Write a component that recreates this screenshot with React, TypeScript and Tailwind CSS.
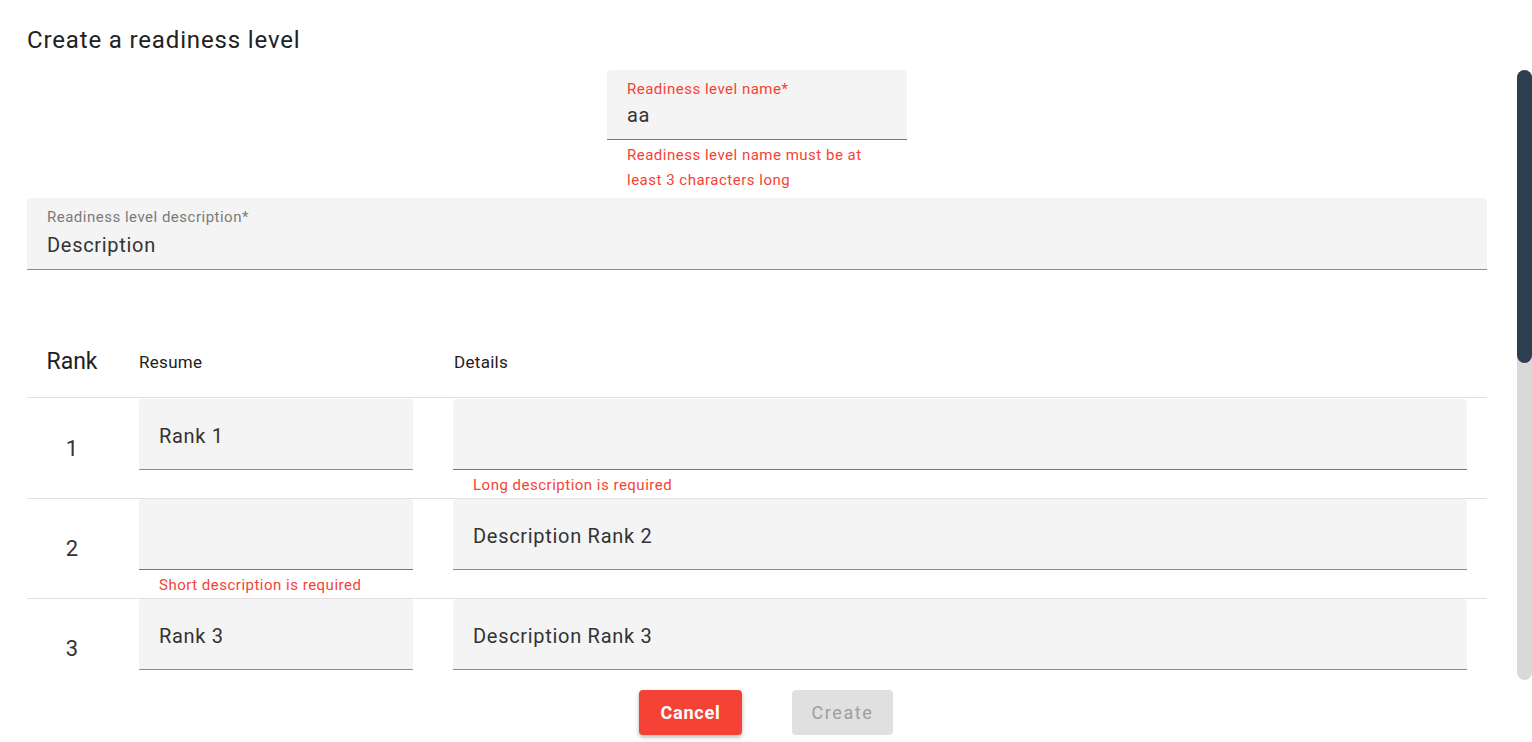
import React from 'react';

const red = 'text-[#f44336]';

function Field({
  value,
  error,
  className = '',
}: {
  value: string;
  error?: string;
  className?: string;
}) {
  return (
    <div className={className}>
      <div
        className={`h-[71px] bg-[#f4f4f4] rounded-t-[4px] border-b flex items-center pl-[20px] pt-[3px] ${
          error ? 'border-[#f44336]' : 'border-[#8c8c8c]'
        }`}
      >
        <span className="text-[20px] tracking-[0.7px] text-[#333]">{value}</span>
      </div>
      {error && (
        <div className={`pl-[20px] mt-[7px] text-[15px] leading-[16px] tracking-[0.5px] ${red}`}>{error}</div>
      )}
    </div>
  );
}

const rows = [
  { rank: 1, resume: 'Rank 1', details: '', detailsError: 'Long description is required' },
  { rank: 2, resume: '', resumeError: 'Short description is required', details: 'Description Rank 2' },
  { rank: 3, resume: 'Rank 3', details: 'Description Rank 3' },
];

export default function App() {
  return (
    <div className="w-[1532px] h-[742px] bg-white overflow-hidden flex flex-col font-['Roboto',sans-serif] text-[#212121]">
      {/* Title */}
      <div className="h-[70px] pl-[27px] pt-[25px]">
        <h1 className="text-[24px] leading-[30px] font-normal tracking-[0.85px]">Create a readiness level</h1>
      </div>

      {/* Scrolling body */}
      <div className="h-[610px] flex">
        <div className="flex-1 pl-[27px] pr-[30px] overflow-hidden">
          {/* Name */}
          <div className="flex flex-col items-center">
            <div className="w-[300px]">
              <div className="h-[70px] bg-[#f4f4f4] rounded-t-[4px] border-b border-[#f44336] px-[20px] pt-[11px]">
                <div className={`text-[15px] leading-[17px] tracking-[0.5px] ${red}`}>Readiness level name*</div>
                <div className="mt-[4px] text-[20px] leading-[26px] tracking-[0.7px] text-[#333]">aa</div>
              </div>
              <div className={`px-[20px] mt-[3px] text-[15px] leading-[25px] tracking-[0.5px] ${red}`}>
                Readiness level name must be at least 3 characters long
              </div>
            </div>
          </div>

          {/* Description */}
          <div className="mt-[5px] h-[72px] bg-[#f4f4f4] rounded-t-[4px] border-b border-[#8c8c8c] px-[20px] pt-[11px]">
            <div className="text-[15px] leading-[17px] tracking-[0.5px] text-[#7a7a7a]">Readiness level description*</div>
            <div className="mt-[6px] text-[20px] leading-[26px] tracking-[0.7px] text-[#333]">Description</div>
          </div>

          {/* Table */}
          <div className="mt-[58px]">
            <div className="h-[70px] flex items-center border-b border-[#e0e0e0]">
              <div className="w-[112px] pr-[22px] text-center text-[23px] text-[#212121]">Rank</div>
              <div className="w-[274px] text-[17px] tracking-[0.3px]">Resume</div>
              <div className="ml-[41px] text-[17px] tracking-[0.3px]">Details</div>
            </div>
            {rows.map((r, i) => (
              <div
                key={r.rank}
                className={`flex border-b border-[#e0e0e0] ${i === 0 ? 'h-[101px] pt-[1px]' : 'h-[100px]'}`}
              >
                <div className="w-[112px] pr-[22px] flex items-center justify-center text-[22px] text-[#333]">
                  {r.rank}
                </div>
                <Field className="w-[274px]" value={r.resume} error={r.resumeError} />
                <Field className="ml-[40px] flex-1 mr-[20px]" value={r.details} error={r.detailsError} />
              </div>
            ))}
          </div>
        </div>

        {/* Scrollbar */}
        <div className="w-[15px] h-full rounded-full bg-[#d9d9d9] relative">
          <div className="absolute top-0 left-0 w-full h-[293px] rounded-full bg-[#2c3e50]" />
        </div>
      </div>

      {/* Actions */}
      <div className="mt-[10px] flex justify-center gap-[50px]">
        <button className="w-[103px] h-[45px] rounded-[4px] bg-[#f44336] text-white text-[18px] font-bold tracking-[0.8px] shadow-[0_2px_4px_rgba(0,0,0,0.3)]">
          Cancel
        </button>
        <button className="w-[101px] h-[45px] rounded-[4px] bg-[#e0e0e0] text-[#9e9e9e] text-[18px] font-normal tracking-[1.6px]">
          Create
        </button>
      </div>
    </div>
  );
}
